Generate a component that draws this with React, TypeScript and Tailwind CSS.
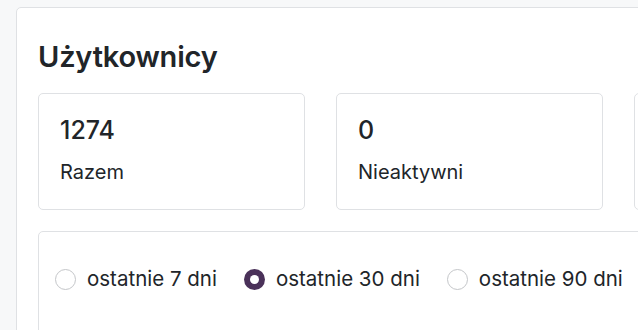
export default function App() {
  const periods = [
    { label: 'ostatnie 7 dni', checked: false },
    { label: 'ostatnie 30 dni', checked: true },
    { label: 'ostatnie 90 dni', checked: false },
  ];

  const stats = [
    { value: '1274', label: 'Razem' },
    { value: '0', label: 'Nieaktywni' },
    { value: '', label: '' },
  ];

  return (
    <div className="h-[330px] w-[638px] overflow-hidden bg-[#f7f8f9] pl-4 pt-[7px] font-['Inter',sans-serif] text-[#212529]">
      <div className="w-[1000px] rounded-tl-[5px] border border-[#dfe1e4] bg-white px-[21px] pt-[29px] pb-10">
        {/* header */}
        <h2 className="text-[29px] font-semibold leading-[40px] tracking-[-0.2px]">Użytkownicy</h2>

        {/* stats */}
        <div className="mt-[16px] flex gap-[31px]">
          {stats.map((s, i) => (
            <div key={i} className="h-[117px] w-[267px] rounded-[5px] border border-[#dfe1e4] px-[21px] pt-[20px]">
              <div className="text-[25px] font-medium leading-[32px]">{s.value}</div>
              <div className="mt-[13px] text-[20px] leading-[26px]">{s.label}</div>
            </div>
          ))}
        </div>

        {/* period selector */}
        <div className="mt-[21px] h-[150px] rounded-[5px] border border-[#dfe1e4] px-4 pt-[34px]">
          <div className="flex items-center gap-[27px]">
            {periods.map((p) => (
              <label key={p.label} className="flex items-center gap-[11px] text-[20.5px] leading-[26px]">
                {p.checked ? (
                  <span className="flex h-[21px] w-[21px] items-center justify-center rounded-full bg-[#4a3159]">
                    <span className="h-[9px] w-[9px] rounded-full bg-white" />
                  </span>
                ) : (
                  <span className="h-[21px] w-[21px] rounded-full border border-[#c4c6c9] bg-white" />
                )}
                {p.label}
              </label>
            ))}
          </div>
        </div>
      </div>
    </div>
  );
}
